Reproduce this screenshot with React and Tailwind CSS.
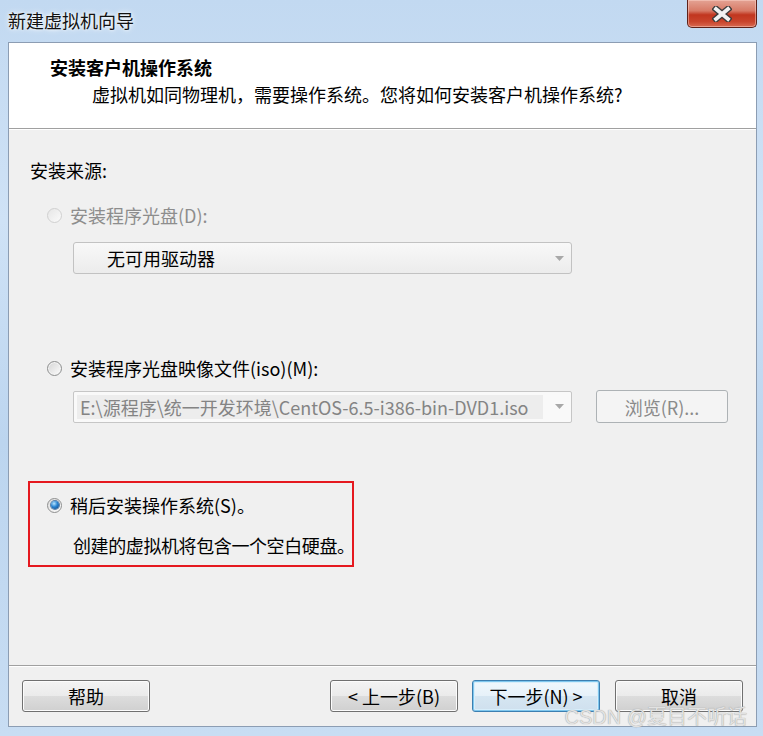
import React from "react";

function Radio({ state }) {
  if (state === "disabled") {
    return (
      <span className="w-[15px] h-[15px] rounded-full border border-[#d0d0d0] bg-[linear-gradient(135deg,#e6e6e6,#fbfbfb)] shrink-0" />
    );
  }
  if (state === "off") {
    return (
      <span className="w-[15px] h-[15px] rounded-full border border-[#8e8f8f] bg-[linear-gradient(135deg,#d4d4d4,#fdfdfd)] shrink-0 shadow-[inset_0_0_0_1px_#f4f4f4]" />
    );
  }
  return (
    <span className="w-[15px] h-[15px] rounded-full border border-[#8e8f8f] bg-[linear-gradient(135deg,#dcdcdc,#fdfdfd)] shrink-0 flex items-center justify-center">
      <span className="w-[8px] h-[8px] rounded-full bg-[radial-gradient(circle_at_38%_32%,#b8e4ff,#2a84d2_45%,#0d3f7c)] shadow-[0_0_0_1px_#5a7fa8]" />
    </span>
  );
}

function Arrow({ color = "#9c9c9c" }) {
  return (
    <svg width="9" height="5" viewBox="0 0 9 5" className="shrink-0">
      <path d="M0 0 L9 0 L4.5 5 Z" fill={color} />
    </svg>
  );
}

function Btn({ children, primary }) {
  return (
    <div
      className={
        "w-[128px] h-[32px] rounded-[3px] border flex items-center justify-center leading-[22px] " +
        (primary
          ? "border-[#3c7fb1] bg-[linear-gradient(to_bottom,#f1f8fd_0%,#e6f1f9_50%,#d6e6f2_50%,#cfe0ee_100%)] shadow-[inset_0_0_0_1px_#7fc7ee,inset_0_0_0_2px_#d8eefb]"
          : "border-[#707070] bg-[linear-gradient(to_bottom,#f3f3f3_0%,#ebebeb_50%,#dddddd_50%,#d0d0d0_100%)] shadow-[inset_0_0_0_1px_#fcfcfc]")
      }
    >
      {children}
    </div>
  );
}

export default function App() {
  return (
    <div className="relative w-[763px] h-[736px] flex flex-col overflow-hidden bg-[linear-gradient(to_bottom,#c2d9f1_0%,#cfe2f6_30%,#bcd5ef_60%,#c8ddf3_100%)] [font-family:'Noto_Sans_CJK_SC','Liberation_Sans',sans-serif] text-[18px] leading-[24px] text-black">
      {/* title bar */}
      <div className="h-[42px] shrink-0 flex items-start justify-between">
        <div className="ml-[8px] mt-[8px] text-[#111] [text-shadow:0_0_6px_#ffffff,0_0_3px_#ffffff]">
          新建虚拟机向导
        </div>
        <div className="mr-[6px] w-[70px] h-[28px] rounded-b-[5px] border border-t-0 border-[#5e2119] bg-[linear-gradient(to_bottom,#e4a394_0%,#d77a66_40%,#c1361f_55%,#c9442c_80%,#d86a52_100%)] shadow-[inset_0_0_0_1px_rgba(255,220,210,0.45)] flex items-center justify-center">
          <svg width="20" height="16" viewBox="0 0 20 16">
            <path d="M4 3 L16 13 M16 3 L4 13" stroke="#3b3b3b" strokeWidth="6.5" strokeLinecap="square" />
            <path d="M4 3 L16 13 M16 3 L4 13" stroke="#f2f2f2" strokeWidth="3.8" strokeLinecap="square" />
          </svg>
        </div>
      </div>

      {/* client area */}
      <div className="ml-[8px] mr-[6px] mb-[9px] flex-1 flex flex-col border border-[#8c9db3] bg-[#f0f0f0]">
        {/* header */}
        <div className="h-[86px] shrink-0 bg-white border-b border-[#a0a0a0] shadow-[0_1px_0_#ffffff] pl-[41px] pt-[12px]">
          <div className="font-bold">安装客户机操作系统</div>
          <div className="mt-[3px] pl-[42px]">虚拟机如同物理机，需要操作系统。您将如何安装客户机操作系统?</div>
        </div>

        {/* body */}
        <div className="flex-1 flex flex-col pl-[19px] pt-[29px]">
          <div className="ml-[2px]">安装来源:</div>

          <div className="mt-[21px] ml-[19px] flex items-center gap-[8px] h-[24px]">
            <Radio state="disabled" />
            <span className="text-[#8d8d8d]">安装程序光盘(D):</span>
          </div>

          <div className="mt-[15px] ml-[45px] w-[499px] h-[32px] rounded-[3px] border border-[#c2c2c2] bg-[linear-gradient(to_bottom,#f8f8f8,#ececec)] flex items-center pl-[33px] pr-[7px]">
            <span className="flex-1">无可用驱动器</span>
            <Arrow color="#a8a8a8" />
          </div>

          <div className="mt-[82px] ml-[19px] flex items-center gap-[8px] h-[24px]">
            <Radio state="off" />
            <span>安装程序光盘映像文件(iso)(M):</span>
          </div>

          <div className="mt-[10px] ml-[45px] flex items-center gap-[24px]">
            <div className="w-[499px] h-[32px] rounded-[2px] border border-[#c6c6c6] bg-[#f9f9f9] flex items-center pl-[3px] pr-[7px]">
              <span className="w-[466px] h-[24px] bg-[#ededed] pl-[3px] text-[#848484] whitespace-nowrap overflow-hidden">
                E:\源程序\统一开发环境\CentOS-6.5-i386-bin-DVD1.iso
              </span>
              <span className="flex-1" />
              <Arrow color="#a8a8a8" />
            </div>
            <div className="w-[132px] h-[33px] rounded-[3px] border border-[#adb2b5] bg-[#f4f4f4] flex items-center justify-center text-[#8a8a8a]">
              浏览(R)...
            </div>
          </div>

          <div className="mt-[58px] w-[326px] h-[86px] border-2 border-[#e5191f] pt-[10px]">
            <div className="ml-[17px] flex items-center gap-[8px] h-[24px]">
              <Radio state="on" />
              <span className="whitespace-nowrap">稍后安装操作系统(S)。</span>
            </div>
            <div className="mt-[16px] ml-[43px] whitespace-nowrap tracking-[-0.4px]">创建的虚拟机将包含一个空白硬盘。</div>
          </div>
        </div>

        {/* footer */}
        <div className="h-[61px] shrink-0 border-t border-[#a0a0a0] shadow-[inset_0_1px_0_#ffffff] flex items-start pt-[14px] pl-[13px] pr-[13px]">
          <Btn>帮助</Btn>
          <div className="flex-1" />
          <Btn>&lt; 上一步(B)</Btn>
          <div className="w-[14px]" />
          <Btn primary>下一步(N) &gt;</Btn>
          <div className="w-[15px]" />
          <Btn>取消</Btn>
        </div>
      </div>

      {/* watermark */}
      <div className="absolute right-[16px] bottom-[11px] text-[20px] leading-[16px] text-[#e2e2e2] [font-family:'Liberation_Sans','Noto_Sans_CJK_SC',sans-serif] [text-shadow:0_0_1px_#8a8a8a]">
        CSDN @夏目不听话
      </div>
    </div>
  );
}
